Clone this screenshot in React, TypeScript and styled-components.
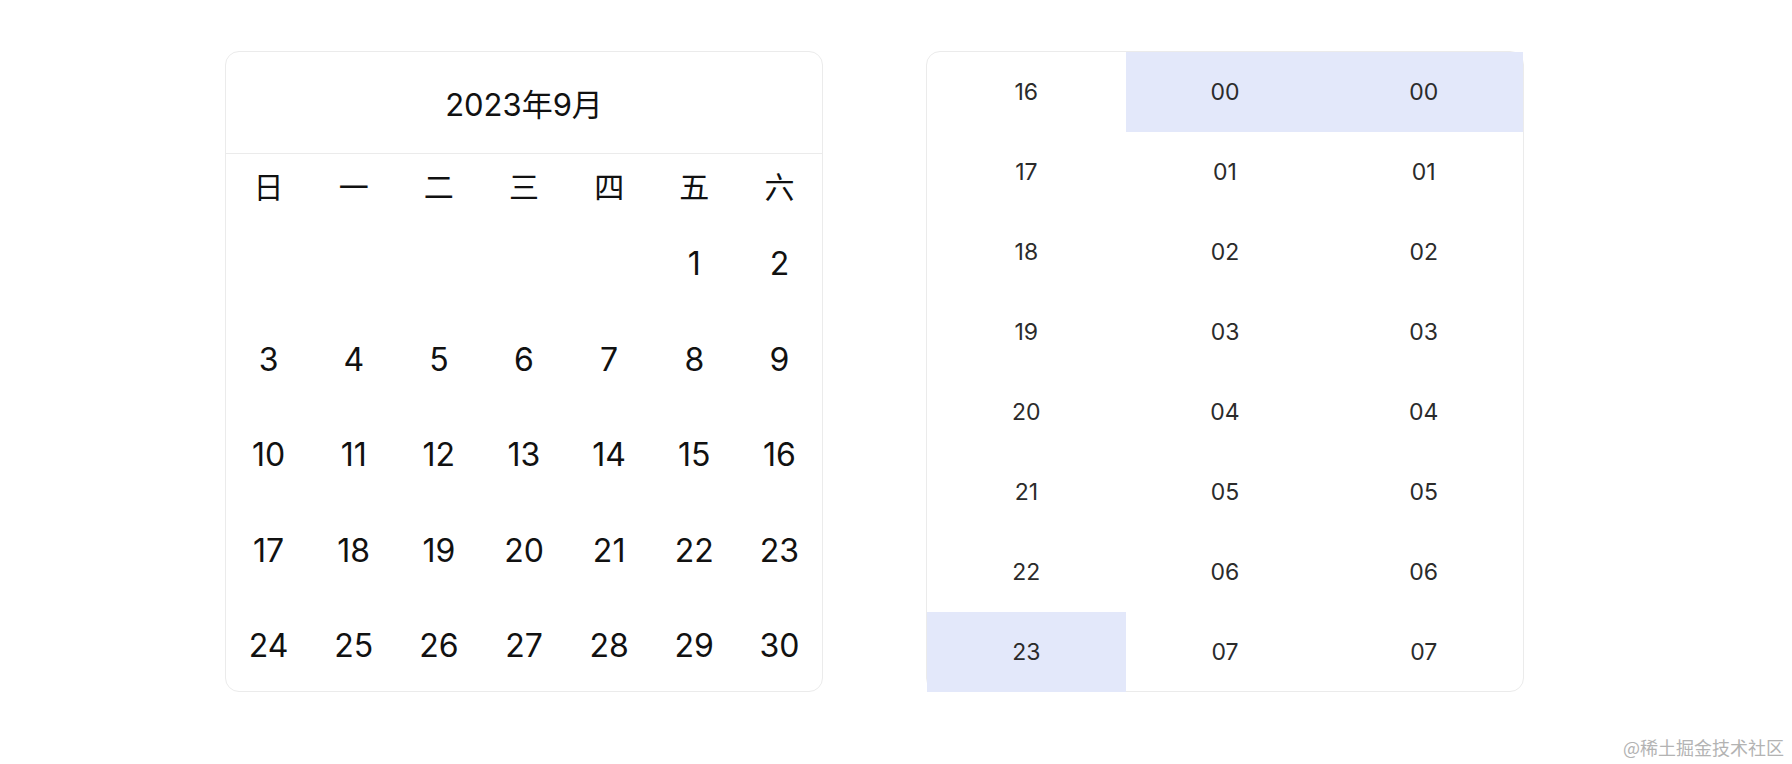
import React from "react";
import styled, { createGlobalStyle } from "styled-components";

const GlobalStyle = createGlobalStyle`
  html, body {
    margin: 0;
    padding: 0;
    background: #ffffff;
  }
  body {
    font-family: "Inter", "Noto Sans CJK SC", sans-serif;
  }
`;

const Page = styled.div`
  position: relative;
  width: 1792px;
  height: 764px;
  box-sizing: border-box;
  padding: 51px 0 0 225px;
  display: flex;
  align-items: flex-start;
  gap: 103px;
`;

const Card = styled.div`
  width: 598px;
  height: 641px;
  box-sizing: border-box;
  border: 1px solid #ebebeb;
  border-radius: 14px;
  background: #fff;
`;

const CalendarCard = styled(Card)`
  display: flex;
  flex-direction: column;
`;

const CalendarHeader = styled.div`
  flex: none;
  height: 101px;
  border-bottom: 1px solid #ebebeb;
  display: flex;
  align-items: center;
  justify-content: center;
  font-size: 31px;
  color: #111;
`;

const Grid = styled.div`
  flex: none;
  display: grid;
  grid-template-columns: repeat(7, 1fr);
  grid-template-rows: 62px repeat(5, 95.5px);
`;

const Cell = styled.div<{ $weekday?: boolean }>`
  display: flex;
  align-items: center;
  justify-content: center;
  font-size: ${(p) => (p.$weekday ? "30px" : "32px")};
  color: #111;
`;

const TimeCard = styled(Card)`
  display: grid;
  grid-template-columns: repeat(3, 1fr);
`;

const Column = styled.div`
  display: flex;
  flex-direction: column;
`;

const TimeCell = styled.div<{ $active?: boolean }>`
  height: 80px;
  display: flex;
  align-items: center;
  justify-content: center;
  font-size: 23px;
  color: #2b2b2b;
  background: ${(p) => (p.$active ? "#e3e8fa" : "transparent")};
`;

const Watermark = styled.div`
  position: absolute;
  right: 8px;
  bottom: 4px;
  font-size: 18px;
  color: #b3b3b3;
  font-family: "Noto Sans CJK SC", sans-serif;
`;

const weekdays = ["日", "一", "二", "三", "四", "五", "六"];
const days: (number | null)[] = [
  ...Array(5).fill(null),
  ...Array.from({ length: 30 }, (_, i) => i + 1),
];

const hours = [16, 17, 18, 19, 20, 21, 22, 23];
const minutes = [0, 1, 2, 3, 4, 5, 6, 7];
const pad = (n: number) => String(n).padStart(2, "0");

export default function App() {
  return (
    <>
      <GlobalStyle />
      <Page>
        <CalendarCard>
          <CalendarHeader>2023年9月</CalendarHeader>
          <Grid>
            {weekdays.map((w) => (
              <Cell key={w} $weekday>
                {w}
              </Cell>
            ))}
            {days.map((d, i) => (
              <Cell key={i}>{d ?? ""}</Cell>
            ))}
          </Grid>
        </CalendarCard>
        <TimeCard>
          <Column>
            {hours.map((h) => (
              <TimeCell key={h} $active={h === 23}>
                {h}
              </TimeCell>
            ))}
          </Column>
          <Column>
            {minutes.map((m) => (
              <TimeCell key={m} $active={m === 0}>
                {pad(m)}
              </TimeCell>
            ))}
          </Column>
          <Column>
            {minutes.map((m) => (
              <TimeCell key={m} $active={m === 0}>
                {pad(m)}
              </TimeCell>
            ))}
          </Column>
        </TimeCard>
        <Watermark>@稀土掘金技术社区</Watermark>
      </Page>
    </>
  );
}
